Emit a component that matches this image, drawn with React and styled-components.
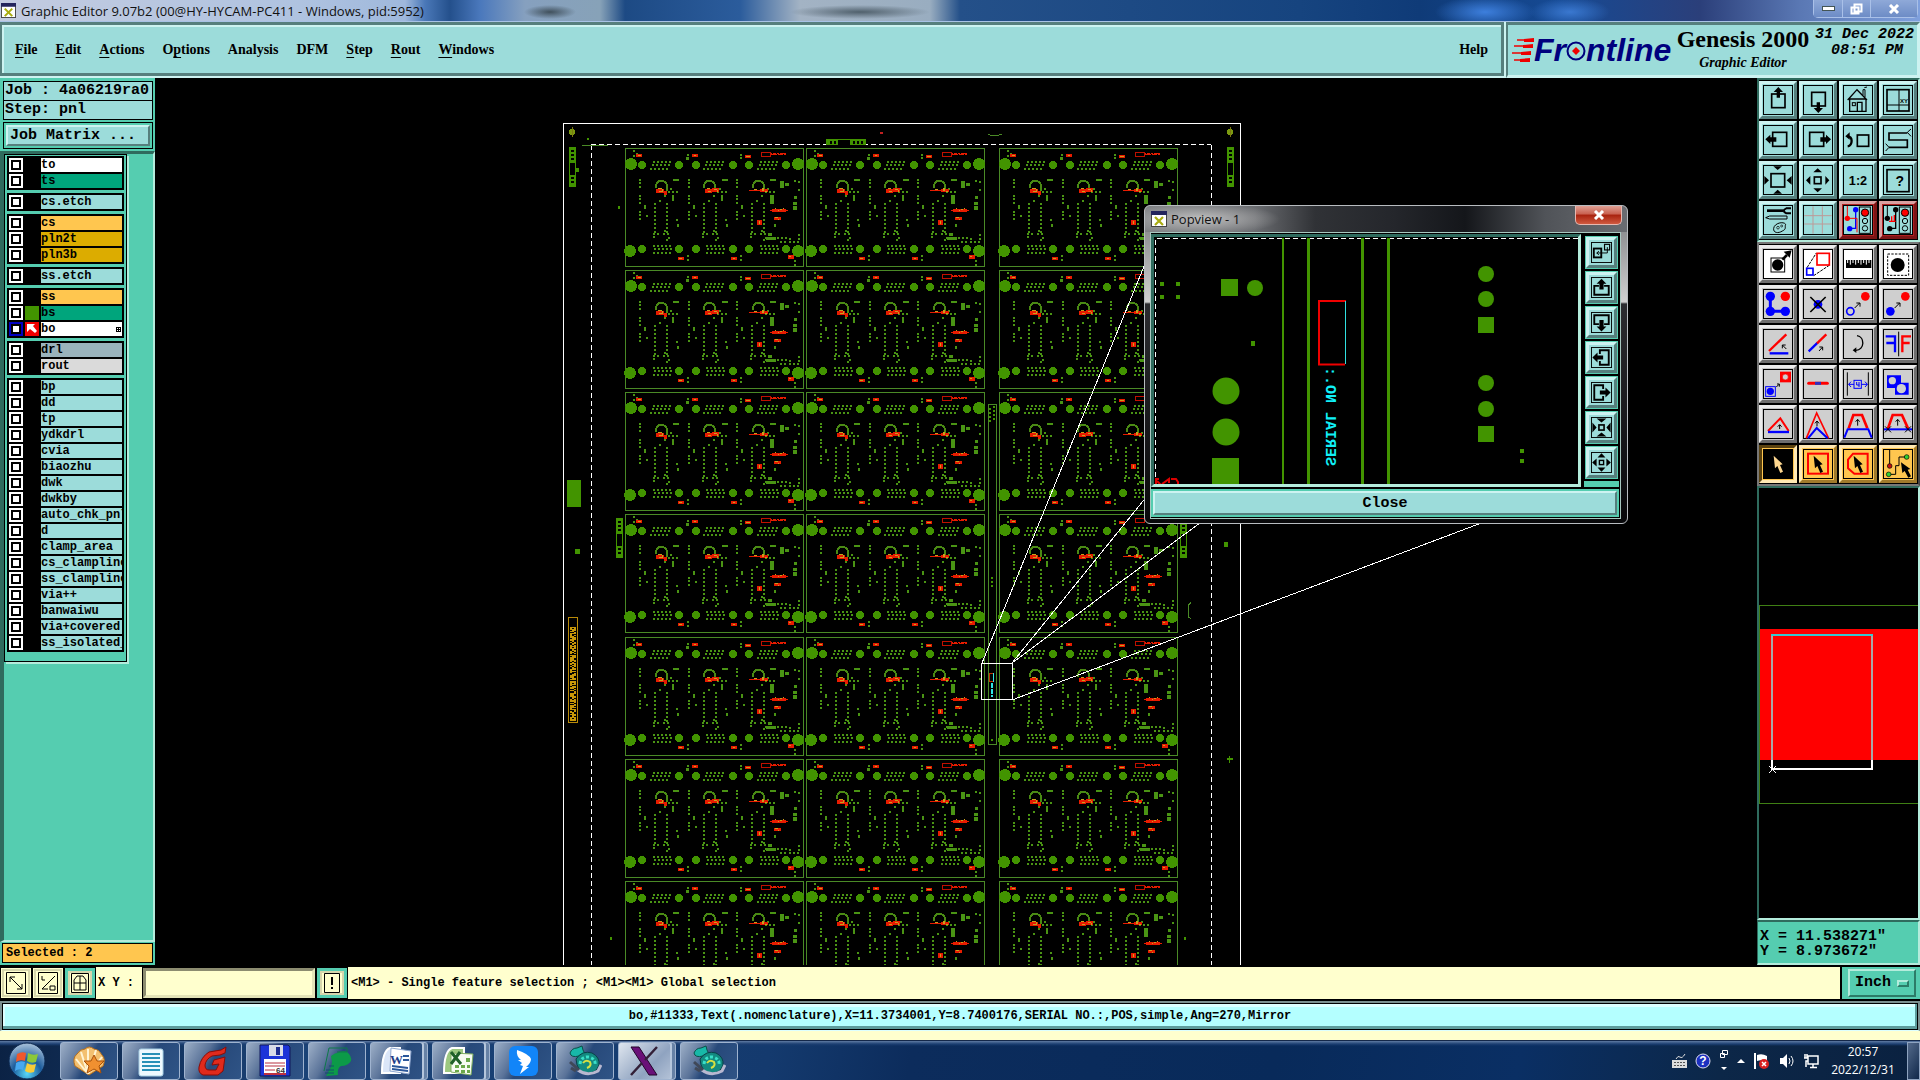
import React from "react";
import styled, { createGlobalStyle, css } from "styled-components";

const C = {
  teal: "#55cdb0",
  tealDark: "#2f6b5e",
  tealLight: "#b4ecdc",
  aqua: "#9cdcda",
  aquaDark: "#567f7d",
  aquaLight: "#cdf3f1",
  amber: "#ffc64f",
  cream: "#ffffce",
  green: "#429400",
  line: "#4a8a26",
  red: "#ff0000",
  blue: "#0000ff",
};

const MONO = `"Liberation Mono", "DejaVu Sans Mono", monospace`;
const SERIF = `"Liberation Serif", "DejaVu Serif", serif`;
const SANS = `"Open Sans", "Noto Sans", sans-serif`;

const Global = createGlobalStyle`
  * { box-sizing: border-box; }
  body { margin: 0; background: #000; }
  button, input, select { font: inherit; color: inherit; margin: 0; padding: 0; border-radius: 0; }
  svg { display: block; }
`;

const bevel = (w, light, dark) => css`
  border-style: solid;
  border-width: ${w}px;
  border-color: ${light} ${dark} ${dark} ${light};
`;

const Screen = styled.div`
  display: flex;
  flex-direction: column;
  min-height: 100vh;
  color: #000;
  font: bold 12px/14px ${MONO};
`;

/* ---------- window title ---------- */

const TitleBar = styled.header`
  display: flex;
  align-items: center;
  justify-content: space-between;
  height: 22px;
  padding-left: 1px;
  border-bottom: 1px solid #a9c3e6;
  background:
    radial-gradient(ellipse 26px 7px at 550px 12px, #40505c, transparent),
    radial-gradient(ellipse 70px 7px at 860px 12px, #50606c, transparent),
    radial-gradient(ellipse 50px 16px at 1485px 12px, #3d7fdd, transparent),
    radial-gradient(ellipse 40px 14px at 1570px 12px, #3a78d0, transparent),
    linear-gradient(90deg, #c3cbe0 0, #afc3e0 300px, #9fb8dc 405px, #4a78b8 425px, #24508c 450px, #4a78bc 480px,
      #86a0bf 525px, #87a2b8 600px, #1d4a84 625px, #2b5c9c 740px, #a3b3c4 800px, #99adc0 930px,
      #245089 960px, #16447f 1300px, #0f3b78 1420px, #164a94 1560px, #2b3f7a 1700px, #5a78b4 1800px, #7fa0dd 100%);
`;

const TitleText = styled.h1`
  display: flex;
  align-items: center;
  gap: 5px;
  margin: 0;
  font: 13px/20px ${SANS};
  color: #111;
`;

const WinButtons = styled.div`
  display: flex;
  align-self: flex-start;
  height: 18px;
  margin-right: 2px;
  border: 1px solid #a9c0e8;
  border-top: 0;
  border-radius: 0 0 5px 5px;
`;

const WinButton = styled.button`
  display: grid;
  place-items: center;
  width: ${(p) => (p.$wide ? 47 : 28)}px;
  border: 0;
  border-left: ${(p) => (p.$first ? 0 : 1)}px solid #a9c0e8;
  background: linear-gradient(#8fa9d8, #6d8cc6);
`;

const AppIcon = ({ size = 16 }) => (
  <svg width={size} height={size} viewBox="0 0 16 16" aria-hidden="true">
    <rect x="0.5" y="0.5" width="15" height="15" fill="#fff" stroke="#444" />
    <rect x="0" y="0" width="16" height="4" fill="#23245c" />
    <path d="M4 6l8 8M12 6l-8 8" stroke="#a9ac10" strokeWidth="2.2" />
  </svg>
);

/* ---------- menu row ---------- */

const TopRow = styled.div`
  display: flex;
  height: 56px;
  background: ${C.aquaLight};
`;

const MenuBar = styled.nav`
  flex: 1;
  display: flex;
  align-items: center;
  gap: 18px;
  margin: 0 2px 2px 0;
  padding: 2px 13px 0 13px;
  background: ${C.aqua};
  border: 3px solid ${C.aquaDark};
  border-width: 3px 3px 3px 2px;
  box-shadow: inset 2px 2px 0 ${C.aquaLight};
  font: bold 14px/20px ${SERIF};
`;

const MenuItem = styled.button`
  border: 0;
  background: none;
  margin-left: ${(p) => (p.$end ? "auto" : 0)};
  padding: 0;
  cursor: pointer;
  u { text-underline-offset: 3px; text-decoration-thickness: 1px; }
`;

const Brand = styled.section`
  display: flex;
  width: 414px;
  padding: 1px 3px 0 4px;
  background: ${C.aqua};
  border-style: solid;
  border-width: 3px 3px 3px 2px;
  border-color: ${C.aquaDark} ${C.aquaLight} ${C.aquaLight} ${C.aquaDark};
`;

const Logo = styled.div`
  display: flex;
  align-items: center;
  width: 160px;
  padding-bottom: 2px;
  color: #00007e;
  font: italic bold 32px/40px "Liberation Sans", sans-serif;
`;

const Product = styled.div`
  width: 140px;
  padding-left: 2px;
  white-space: nowrap;
  text-align: center;
  font: bold 24px/26px ${SERIF};
  small { display: block; font: italic bold 14px/22px ${SERIF}; }
`;

const Stamp = styled.time`
  flex: 1;
  display: flex;
  flex-direction: column;
  align-items: flex-end;
  padding-top: 1px;
  white-space: nowrap;
  font: italic bold 15px/16px ${MONO};
  span + span { padding-right: 11px; }
`;

/* ---------- workspace ---------- */

const Work = styled.main`
  flex: 1;
  display: flex;
  min-height: 760px;
  padding-bottom: 2px;
  background: #000;
`;

const Side = styled.aside`
  display: flex;
  flex-direction: column;
  width: 155px;
  padding-top: 3px;
  background: ${C.teal};
  overflow: hidden;
`;

const JobBox = styled.dl`
  display: grid;
  gap: 1px;
  margin: 0 2px 2px 3px;
  padding: 1px;
  background: #000;
  font: bold 15px/18px ${MONO};
  div { display: flex; gap: 9px; height: 18px; padding-left: 1px; background: ${C.aqua}; white-space: pre; }
  dt, dd { margin: 0; }
`;

const MatrixFrame = styled.div`
  margin: 0 2px 2px 3px;
  padding: 2px;
  border: 1px solid #000;
`;

const MatrixButton = styled.button`
  display: block;
  width: 100%;
  height: 21px;
  padding-left: 2px;
  text-align: left;
  background: ${C.aqua};
  font: bold 15px/15px ${MONO};
  ${bevel(2, C.aquaLight, C.aquaDark)}
`;

const LayerArea = styled.div`
  flex: 1;
  border-style: solid;
  border-width: 3px 2px 2px 4px;
  border-color: ${C.tealDark} ${C.tealLight} ${C.tealLight} ${C.tealDark};
`;

const LayerList = styled.div`
  width: 123px;
  padding: 1px 2px 9px 2px;
  display: flex;
  flex-direction: column;
  gap: 3px;
  border: 1px solid #000;
  box-shadow: 2px 2px 0 ${C.tealLight};
`;

const LayerGroup = styled.ul`
  width: 117px;
  margin: 0;
  padding: 2px 2px 0 2px;
  list-style: none;
  background: #000;
`;

const LayerRow = styled.li`
  display: grid;
  grid-template-columns: 14px 14px 81px;
  column-gap: 2px;
  height: 16px;
  padding-bottom: 2px;
`;

const LayerTick = styled.input`
  appearance: none;
  width: 14px;
  height: 14px;
  border: 2px solid ${(p) => (p.$on ? "#0000c0" : "#fff")};
  background: #fff;
  box-shadow: inset 0 0 0 2px #000;
`;

const Swatch = styled.span`
  background: ${(p) => p.$c};
`;

const LayerName = styled.label`
  display: flex;
  justify-content: space-between;
  align-items: center;
  padding-right: 1px;
  overflow: hidden;
  white-space: nowrap;
  background: ${(p) => p.$c};
  line-height: 14px;
`;

const Selected = styled.output`
  margin: 1px 2px 2px 2px;
  padding-left: 3px;
  border: 1px solid #000;
  background: ${C.amber};
  line-height: 18px;
`;

const Canvas = styled.div`
  position: relative;
  flex: 1;
  min-width: 0;
  > svg { position: absolute; inset: 0; width: 100%; height: 100%; }
`;

/* ---------- tool palette ---------- */

const Palette = styled.aside`
  display: flex;
  flex-direction: column;
  width: 163px;
`;

const ToolGrid = styled.div`
  display: grid;
  grid-template-columns: repeat(4, 38px);
  gap: 2px;
  padding: 1px 1px 1px 0;
  background: #000;
  border-style: solid;
  border-width: 2px;
  border-color: ${(p) => (p.$gray ? "#777 #444 #777 #777" : `${C.tealDark} ${C.tealLight} ${C.tealLight} ${C.tealDark}`)};
`;

const tones = {
  aqua: ["#9cdcda", C.aquaLight, C.aquaDark],
  red: ["#b02020", "#d9a0a0", "#7c1515"],
  gray: ["#c6c6c6", "#ececec", "#6e6e6e"],
  amber: [C.amber, "#ffe9b4", "#a07a2c"],
  active: [C.amber, "#5a4210", "#ffe9b4"],
};

const Tool = styled.button`
  display: grid;
  place-items: center;
  width: 38px;
  height: 38px;
  background: ${(p) => tones[p.$tone][0]};
  ${(p) => bevel(3, tones[p.$tone][1], tones[p.$tone][2])}
`;

const toolBack = { white: "#fff", black: "#000", gray: "#cfcfcf", aqua: "#9cdcda", amber: C.amber };

const Glyph = ({ name, back, size = 30 }) => (
  <svg width={size} height={size} viewBox="0 0 90 90" aria-hidden="true">
    <rect x="1.5" y="1.5" width="87" height="87" fill={toolBack[back]} stroke="#000" strokeWidth={size < 30 ? 5 : 3} />
    <g fill="none" stroke="#000" strokeWidth="5" strokeLinejoin="miter">
      {glyphs[name]}
    </g>
  </svg>
);

const K = { fill: "#000", stroke: "none" };
const R = { fill: C.red, stroke: "none" };
const B = { fill: C.blue, stroke: "none" };
const cursor = "M32 20L36 58L43 51L52 72L60 68L51 48L59 46Z";

const light = (a, b) => (
  <>
    <rect x="49" y="6" width="33" height="79" strokeWidth="3" />
    <circle cx="66" cy="23" r="11" fill={C.red} strokeWidth="3" />
    <circle cx="66" cy="48" r="8" strokeWidth="3" />
    <circle cx="66" cy="70" r="8" strokeWidth="3" />
    <path d="M13 3V40" stroke={b} strokeWidth="3" />
    <path d="M38 14V70H20M38 30" stroke={a} strokeWidth="4" />
    <circle cx="38" cy="14" r="8" fill={a} stroke="none" />
    <circle cx="20" cy="71" r="8" fill={a} stroke="none" />
    <circle cx="13" cy="40" r="8" fill={b} stroke="none" />
  </>
);

const glyphs = {
  up: (<><rect x="26" y="27" width="40" height="41" /><path d="M46 6L60 21H51V38H41V21H32Z" {...K} /></>),
  down: (<><rect x="26" y="22" width="41" height="41" /><path d="M46 84L60 69H51V52H41V69H32Z" {...K} /></>),
  left: (<><rect x="29" y="22" width="42" height="42" /><path d="M7 43L22 29V37H40V50H22V57Z" {...K} /></>),
  right: (<><rect x="20" y="22" width="42" height="42" /><path d="M84 43L69 29V37H52V50H69V57Z" {...K} /></>),
  home: (
    <><path d="M14 45L42 14L72 45M20 42V79H69V42M20 42H69M43 79V52H57V79" strokeWidth="4" />
      <rect x="28" y="53" width="9" height="9" strokeWidth="3" /><path d="M60 30V14H66V36M64 8L72 6" strokeWidth="3" /></>
  ),
  xy: (
    <><rect x="12" y="14" width="66" height="64" /><path d="M48 14V78M12 60H78" strokeWidth="3" />
      <text x="51" y="54" fontSize="18" fontFamily="Liberation Sans" {...K}>XY</text></>
  ),
  back: (<><rect x="43" y="30" width="34" height="34" /><path d="M13 34C30 32 30 62 14 64" strokeWidth="7" /><path d="M7 34L20 22V44Z" {...K} /></>),
  snake: (<><path d="M73 24H18V45H73V67H18" /><path d="M84 12L73 22L84 34M8 56L18 67L8 78" strokeWidth="3" /></>),
  fit: (
    <><rect x="24" y="26" width="41" height="40" />
      <path d="M44 15L31 4H57ZM44 74L31 86H57ZM18 46L4 33V59ZM71 46L86 33V59Z" {...K} /></>
  ),
  spread: (
    <><rect x="34" y="36" width="20" height="20" />
      <path d="M44 10L31 22H57ZM44 82L31 70H57ZM9 46L22 33V59ZM79 46L67 33V59Z" {...K} /></>
  ),
  ratio: <text x="45" y="59" textAnchor="middle" fontSize="38" fontWeight="bold" fontFamily="Liberation Sans" {...K}>1:2</text>,
  help: (
    <><rect x="12" y="14" width="66" height="66" />
      <text x="50" y="64" textAnchor="middle" fontSize="42" fontWeight="bold" fontFamily="Liberation Sans" {...K}>?</text></>
  ),
  tools: (
    <><path d="M12 17H62" strokeWidth="8" /><path d="M84 10H70C60 14 60 20 70 25H84" strokeWidth="6" />
      <path d="M8 38L20 33H72V42H20Z" strokeWidth="3" />
      <path d="M32 70C34 54 62 48 68 58C64 66 72 72 58 78C46 86 30 84 32 70Z" strokeWidth="3" />
      <circle cx="45" cy="68" r="4" strokeWidth="2" /><circle cx="56" cy="63" r="3" strokeWidth="2" /></>
  ),
  grid: <path d="M30 4V86M58 4V86M4 32H86M4 57H86" stroke="#bd9a98" strokeWidth="3" />,
  lightBlue: (<>{light(C.blue, C.red)}<path d="M13 40H42V82" stroke={C.red} strokeWidth="3" /></>),
  lightBlack: (<>{light("#000", "#000")}<path d="M18 49H38M26 49V34M34 49V30" stroke={C.red} strokeWidth="4" /></>),
  pick: (
    <><rect x="24" y="27" width="41" height="42" strokeWidth="3" /><circle cx="44" cy="48" r="17" {...K} />
      <path d="M58 32L72 18" strokeWidth="8" /><path d="M86 4L62 8L80 26Z" {...K} /></>
  ),
  zoomRect: (
    <><path d="M12 56L40 12M32 80L80 48" strokeWidth="3" strokeDasharray="9 3" />
      <rect x="42" y="13" width="37" height="35" stroke={C.red} /><rect x="11" y="58" width="19" height="20" stroke={C.blue} /></>
  ),
  ruler: (<><rect x="9" y="33" width="76" height="24" {...K} /><path d="M14 33v9M22 33v14M30 33v9M38 33v14M46 33v9M54 33v14M62 33v9M70 33v14M78 33v9" stroke="#fff" strokeWidth="3" /></>),
  region: (<><rect x="14" y="15" width="63" height="64" strokeWidth="3" strokeDasharray="7 4" /><circle cx="44" cy="48" r="21" {...K} /></>),
  net: (
    <><path d="M22 22V67H66" stroke={C.blue} strokeWidth="9" /><circle cx="22" cy="22" r="14" {...B} />
      <circle cx="22" cy="67" r="14" {...B} /><circle cx="67" cy="67" r="14" {...B} /><circle cx="67" cy="22" r="14" {...R} /></>
  ),
  del: (<><circle cx="45" cy="46" r="13" {...B} /><path d="M22 24L68 69M68 24L22 69" /></>),
  copy: (<><circle cx="22" cy="67" r="11" stroke={C.blue} /><circle cx="67" cy="22" r="13" {...R} /><path d="M35 57L50 42M40 42H51V53" strokeWidth="3" /></>),
  move: (<><circle cx="22" cy="67" r="13" {...B} /><circle cx="67" cy="22" r="13" {...R} /><path d="M35 57L50 42M40 42H51V53" strokeWidth="3" /></>),
  angle: (<><path d="M18 66L70 16" stroke={C.red} strokeWidth="7" /><path d="M20 73H76" stroke={C.blue} strokeWidth="7" /><path d="M70 60L58 48M58 58V48H68" strokeWidth="3" /></>),
  stretch: (<><path d="M17 67L44 41" stroke={C.blue} strokeWidth="7" /><path d="M42 43L70 16" stroke={C.red} strokeWidth="7" /><path d="M48 66L58 55M49 54H59V64" strokeWidth="3" /></>),
  rotate: (<><path d="M42 20C66 24 66 62 38 64" strokeWidth="4" /><path d="M29 64L40 55V72Z" {...K} /></>),
  mirror: (<><path d="M8 22H36V70M10 42H36" stroke={C.blue} strokeWidth="7" /><path d="M84 22H58V70M58 42H80" stroke={C.red} strokeWidth="7" /><path d="M47 8V82" strokeWidth="3" /></>),
  swap: (
    <><rect x="51" y="8" width="33" height="32" {...R} /><circle cx="67" cy="24" r="9" fill="#cfcfcf" stroke={C.red} strokeWidth="2" />
      <rect x="8" y="53" width="29" height="29" stroke={C.blue} strokeWidth="3" /><circle cx="22" cy="67" r="11" {...B} />
      <path d="M40 54L48 46M42 45H49V53" strokeWidth="3" /></>
  ),
  segment: (<><path d="M17 43H73" stroke={C.red} strokeWidth="9" strokeLinecap="round" /><path d="M36 43H54" stroke="#3030c0" strokeWidth="9" /></>),
  width: (
    <><path d="M13 10V80M76 10V80" strokeWidth="3" />
      <g stroke={C.blue} strokeWidth="3"><rect x="33" y="34" width="22" height="24" /><path d="M17 46H33M55 46H73M24 38L17 46L24 54M66 38L73 46L66 54M41 39V48H49M48 39V54" /></g></>
  ),
  merge: (<><path d="M12 19H54V41H77V77H36V57H12Z" {...B} /><circle cx="28" cy="35" r="11" fill="#cfcfcf" stroke="none" /><circle cx="55" cy="59" r="14" fill="#cfcfcf" stroke="none" /></>),
  tri: (<><path d="M15 66L52 28L77 66" stroke={C.red} strokeWidth="6" /><path d="M15 69H78" stroke={C.blue} strokeWidth="7" /><path d="M50 60V48M44 53L50 47L56 53" strokeWidth="3" /></>),
  peak: (<><path d="M10 88L41 12L77 88" stroke={C.red} /><path d="M15 88L41 57L74 88" stroke={C.blue} strokeWidth="6" /><path d="M42 52V36M36 43L42 36L48 43" strokeWidth="3" /></>),
  trap: (<><path d="M17 58L31 18H57L73 58" stroke={C.red} strokeWidth="8" /><path d="M4 86L14 61H76L86 86" stroke={C.blue} strokeWidth="6" /><path d="M44 50V32M38 38L44 31L50 38" strokeWidth="3" /></>),
  trapX: (
    <><path d="M15 58L29 18H57L75 58" stroke={C.red} strokeWidth="8" /><path d="M3 61H87" stroke={C.blue} strokeWidth="6" />
      <path d="M44 50V32M38 38L44 31L50 38M6 52L24 70M24 52L6 70M66 52L84 70M84 52L66 70" strokeWidth="3" /></>
  ),
  arrow: <path d={cursor} fill="#ffd890" stroke="none" />,
  arrowRect: (<><rect x="15" y="14" width="60" height="60" stroke={C.red} strokeWidth="6" /><path d={cursor} {...K} /></>),
  arrowPoly: (<><path d="M30 14H74V74H34L15 58V32Z" stroke={C.red} strokeWidth="6" /><path d={cursor} {...K} /></>),
  arrowNet: (
    <><path d="M20 3V48M16 76H38V50H48V24H70" strokeWidth="3" />
      <circle cx="20" cy="51" r="7" fill="#c01010" strokeWidth="2" /><circle cx="17" cy="76" r="7" fill="#30d030" strokeWidth="2" />
      <circle cx="71" cy="24" r="7" fill="#30d030" strokeWidth="2" /><path d="M54 40L58 72L65 66L76 86L84 82L74 62L82 60Z" {...K} /></>
  ),
  dock: (<><rect x="12" y="28" width="32" height="38" strokeWidth="8" /><rect x="58" y="10" width="22" height="24" /><path d="M24 47H70V22M34 39L25 47L34 56" strokeWidth="4" /></>),
  panUp: (<><path d="M34 38H14V76H76V38H56" strokeWidth="8" /><path d="M45 8L66 29H54V54H36V29H24Z" {...K} /></>),
  panDown: (<><path d="M34 52H14V14H76V52H56" strokeWidth="8" /><path d="M45 84L66 62H54V34H36V62H24Z" {...K} /></>),
  panLeft: (<><path d="M38 30V14H76V76H38V60" strokeWidth="8" /><path d="M6 45L28 24V36H52V54H28V66Z" {...K} /></>),
  panRight: (<><path d="M52 30V14H14V76H52V60" strokeWidth="8" /><path d="M84 45L62 24V36H38V54H62V66Z" {...K} /></>),
  shrink: (
    <><rect x="34" y="34" width="22" height="22" strokeWidth="7" />
      <path d="M45 24L24 6H66ZM45 66L24 84H66ZM24 45L6 24V66ZM66 45L84 24V66Z" {...K} /></>
  ),
  grow: (
    <><rect x="36" y="36" width="18" height="18" strokeWidth="6" />
      <path d="M45 5L62 24H28ZM45 85L62 66H28ZM5 45L24 28V62ZM85 45L66 28V62Z" {...K} /></>
  ),
};

const aquaTools = [
  "up", "down", "home", "xy", "left", "right", "back", "snake",
  "fit", "spread", "ratio", "help", "tools", "grid", "lightBlue", "lightBlack",
];
const grayTools = [
  "pick", "zoomRect", "ruler", "region", "net", "del", "copy", "move", "angle", "stretch",
  "rotate", "mirror", "swap", "segment", "width", "merge", "tri", "peak", "trap", "trapX",
  "arrow", "arrowRect", "arrowPoly", "arrowNet",
];

const Overview = styled.div`
  flex: 1;
  min-height: 200px;
  border-style: solid;
  border-width: 2px;
  border-color: ${C.tealDark} ${C.tealLight} ${C.tealLight} ${C.tealDark};
  svg { width: 100%; height: 100%; }
`;

const Coords = styled.output`
  height: 45px;
  padding: 7px 2px;
  white-space: pre;
  background: ${C.teal};
  border-style: solid;
  border-width: 2px 2px 2px 1px;
  border-color: ${C.tealDark} ${C.tealLight} ${C.tealLight} ${C.tealDark};
  font: bold 15px/15px ${MONO};
`;

/* ---------- board drawing ---------- */

const sq = (list) =>
  list
    .map(([x, y, w = 6, h = 6]) => {
      const X = Math.round((x - 15) / 3);
      const Y = Math.round((y - 114) / 3);
      const W = Math.max(1, Math.round(w / 3));
      return `M${X} ${Y}h${W}v${Math.max(1, Math.round(h / 3))}h-${W}z`;
    })
    .join("");

const pads = [];
[0, 159, 321].forEach((o) => {
  for (let i = 0; i < 5; i++) {
    pads.push([99 + o + i * 12, 153], [96 + o + i * 12, 163], [90 + o + i * 12, 174]);
    pads.push([99 + o + i * 12, 405], [102 + o + i * 12, 415], [99 + o + i * 12, 426]);
  }
});
[0, 147, 291].forEach((o, n) => {
  [207, 216, 228, 255, 264, 276, 303, 312, 324].forEach((y) => pads.push([57 + o, y]));
  pads.push([72 + o, 285, 6, 12], [78 + o, 315]);
  for (let y = 279; y < 366; y += 12) pads.push([102 + o, y], [138 + o, y]);
  pads.push([99 + o, 369], [111 + o, 369], [129 + o, 369], [141 + o, 369], [132 + o, 361], [99 + o, 378], [144 + o, 380], [138 + o, 387]);
  pads.push([159 + o, 207, 18, 6], [144 + o, 243], [156 + o, 243], [168 + o, 243], [150 + o, 234], [132 + o, 255], [117 + o, 270]);
  if (n < 2) pads.push([156 + o, 255, 6, 18], [168 + o, 327], [171 + o, 342, 6, 9]);
});
[[38, 121], [38, 134], [48, 129], [200, 132], [198, 142, 9, 9], [360, 132], [360, 142], [200, 435], [200, 448], [360, 435], [360, 448], [522, 449], [522, 461],
  [480, 213, 12, 21], [495, 219, 12, 9], [522, 210], [534, 213], [534, 237], [450, 255, 12, 28], [522, 258, 9, 9], [520, 275, 11, 9], [519, 288, 12, 12],
  [462, 342, 6, 9], [444, 370, 12, 9], [438, 381, 30, 9], [471, 381], [483, 381], [495, 381], [507, 384], [480, 393], [492, 393], [507, 393], [519, 393], [531, 393], [534, 384], [534, 372]]
  .forEach((p) => pads.push(p));

const reds = [
  [48, 133, 18, 9], [216, 133, 18, 9], [376, 135, 17, 9], [174, 441, 17, 9], [333, 441, 17, 9], [504, 436, 18, 12],
  [108, 236, 24, 12], [132, 243, 9, 12], [255, 237, 21, 12], [276, 234, 21, 12], [387, 240, 33, 4], [420, 237, 24, 9],
  [450, 300, 54, 4], [456, 297, 42, 9], [463, 321, 20, 9], [411, 330, 15, 15], [453, 130, 45, 6],
];
const ambers = [
  [54, 136, 9, 3], [222, 136, 6, 3], [378, 138, 12, 3], [178, 444, 9, 3], [339, 444, 6, 3], [507, 438, 6, 3],
  [114, 234, 12, 3], [117, 243, 9, 3], [126, 237, 3, 9], [261, 234, 9, 3], [264, 243, 9, 3], [282, 238, 9, 3], [291, 240, 3, 6],
  [402, 237, 9, 3], [426, 234, 6, 9], [435, 243, 6, 3],
  [465, 294, 4, 3], [474, 300, 4, 3], [480, 297, 6, 4], [489, 294, 3, 4], [466, 321, 9, 3], [474, 327, 4, 3], [417, 333, 3, 9],
];
const gaps = [[456, 130, 3, 3], [468, 129, 3, 3], [477, 129, 3, 3], [489, 133, 3, 3], [471, 133, 3, 3]];

const Board = () => (
  <g>
    <rect x="0.5" y="0.5" width="178" height="118" fill="none" stroke={C.line} />
    <g fill={C.green}>
      {[[6, 16], [173, 16], [5, 103], [173, 103]].map(([x, y]) => (
        <circle key={x + "-" + y} cx={x} cy={y} r="6" />
      ))}
      {[17, 54, 71, 108, 124, 161].map((x) => (
        <g key={x}><circle cx={x} cy="17" r="4" /><circle cx={x} cy="101" r="4" /></g>
      ))}
      <path d={sq(pads)} fill="#4a9414" />
    </g>
    <g fill="none" stroke="#4a8a14" strokeWidth="2">
      {[36, 84, 133].map((x) => (
        <path key={x} d={`M${x - 5} 40V37q1 -4 5 -4q5 0 6 4v6`} />
      ))}
    </g>
    <path d={sq(reds)} fill="#e81c00" />
    <path d={sq(ambers)} fill="#c8a01c" />
    <path d={sq(gaps)} fill="#000" />
    <rect x="136.5" y="4.5" width="9" height="4" fill="none" stroke="#c01000" />
  </g>
);

const rows = [148, 270, 392, 514, 637, 759, 881];
const cols = [625, 806, 999];

const Comb = ({ x, y, turned }) => (
  <g transform={turned ? `translate(${x} ${y}) rotate(90)` : `translate(${x} ${y})`}>
    <rect width={turned ? 6 : 7} height="40" fill={C.green} />
    <rect x="1" y="16" width="5" height="12" fill="#000" />
    <path d="M2 3h3v2h-3zM2 7h3v2h-3zM2 11h3v2h-3zM2 30h3v2h-3zM2 34h3v2h-3z" fill="#000" />
  </g>
);

const PanelDrawing = () => (
  <svg role="img" aria-label="Panel layout" shapeRendering="crispEdges">
    <defs><g id="board"><Board /></g></defs>
    <g transform="translate(-155 -78)">
      {cols.map((x) => rows.map((y) => <use key={x + "_" + y} href="#board" x={x} y={y} />))}
      <path d="M563.5 1200V123.5H1240.5V1200" fill="none" stroke="#fff" />
      <path d="M591.5 145V1200M591 144.5H1211M1211.5 145V1200" fill="none" stroke="#fff" strokeDasharray="5 3" />
      <rect x="988.5" y="404.5" width="8" height="340" fill="none" stroke={C.line} />
      <path d="M990 408v14M994 406v16M992 577v10M991 740h3" stroke={C.green} strokeWidth="2" strokeDasharray="2 2" />
      <Comb x="569" y="147" /><Comb x="1227" y="147" /><Comb x="616" y="518" /><Comb x="1180" y="518" />
      <Comb x="866" y="139" turned />
      <path d="M582 145.5h26M1188.5 604v14M1191 602l-2 3M1191 619l-2 -2M988 134q6 4 14 0" stroke={C.line} fill="none" />
      <g fill="#7c9a10"><circle cx="572" cy="132" r="3" /><circle cx="1230" cy="132" r="3" /></g>
      <path d="M572.5 127v10M1230.5 127v10" stroke="#7c7a10" />
      <g fill={C.green}>
        <rect x="567" y="480" width="14" height="27" /><rect x="575" y="549" width="5" height="5" />
        <rect x="1224" y="542" width="4" height="5" /><rect x="618" y="206" width="2" height="3" />
        <rect x="610" y="937" width="2" height="3" /><rect x="1184" y="937" width="2" height="3" />
        <rect x="587" y="138" width="2" height="2" /><rect x="576" y="168" width="3" height="4" />
        <path d="M1229 756h1v2h3v2h-3v3h-1v-3h-2v-2h2z" />
      </g>
      <rect x="880" y="132" width="3" height="2" fill="#c02020" />
      <rect x="568.5" y="617.5" width="9" height="105" fill="none" stroke="#b98a08" />
      <path d="M571 627V721" stroke="#c89808" strokeWidth="2" strokeDasharray="3 1 1 1 5 1 2 1 1 2 4 2" />
      <path d="M573 627V721" stroke="#c89808" strokeWidth="2" strokeDasharray="1 1 3 1 1 2 6 1 2 1" />
      <path d="M575 627V721" stroke="#c89808" strokeWidth="2" strokeDasharray="4 1 2 1 1 1 3 2 2 1" />
      <g stroke="#fff" fill="none">
        <rect x="981.5" y="663.5" width="31" height="36" />
        <path d="M982 663L1156 237M1012 663L1156 485M1012 663L1582 238M1012 700L1582 485" />
      </g>
      <path d="M993 673.5H989.5V681.5H993" stroke="#c03000" fill="none" /><path d="M993.5 673v9" stroke="#30e8e8" /><path d="M992 683v14" stroke="#30e8e8" strokeWidth="2" strokeDasharray="5 1" />
    </g>
  </svg>
);

/* ---------- popview window ---------- */

const Pop = styled.section`
  position: absolute;
  left: 989px;
  top: 127px;
  width: 484px;
  padding: 0 6px 4px 5px;
  border: 1px solid #b8bcc0;
  border-radius: 6px;
  background:
    radial-gradient(ellipse 80px 16px at 55px 13px, #c0c0c0, transparent),
    linear-gradient(90deg, #808285 0, #6a6c70 110px, #303236 170px, #24262b 250px, #14161a 320px, #505358 400px, #6a6d72 100%) top / 100% 26px no-repeat,
    linear-gradient(#77797c 0, #d0d0d0 96px, #2c2c30 98px, #08080a 100%);
`;

const PopTitle = styled.div`
  display: flex;
  justify-content: space-between;
  height: 26px;
  padding-left: 1px;
  h2 { display: flex; align-items: center; gap: 4px; margin: 0; font: 13px/26px ${SANS}; color: #111; }
`;

const PopX = styled.button`
  display: grid;
  place-items: center;
  width: 47px;
  height: 19px;
  margin-right: -1px;
  border: 1px solid #e8b8b0;
  border-top: 0;
  border-radius: 0 0 5px 5px;
  background: linear-gradient(#e0a094 0, #c9604f 45%, #a8220e 50%, #d05a40 100%);
`;

const PopBody = styled.div`
  padding: 1px 1px 1px 0;
  border: 1px solid #a8c8c0;
  background: #000;
`;

const PopTop = styled.div`
  display: flex;
  gap: 3px;
`;

const PopView = styled.div`
  flex: 1;
  min-width: 0;
  border-style: solid;
  border-width: 3px;
  border-color: ${C.tealDark} ${C.tealLight} ${C.tealLight} ${C.tealDark};
  svg { width: 100%; height: 247px; }
`;

const PopTools = styled.div`
  display: flex;
  flex-direction: column;
  gap: 2px;
  padding-top: 2px;
  width: 35px;
  &::after { content: ""; flex: 1; background: ${C.teal}; }
`;

const PopTool = styled.button`
  display: grid;
  place-items: center;
  width: 33px;
  height: 33px;
  margin-left: 1px;
  background: ${C.aqua};
  outline: 1px solid ${C.teal};
  outline-offset: -1px;
  ${bevel(4, C.aquaLight, C.aquaDark)}
`;

const PopClose = styled.button`
  display: block;
  width: 100%;
  height: 28px;
  margin-top: 2px;
  padding-top: 1px;
  background: ${C.aqua};
  outline: 2px solid ${C.teal};
  outline-offset: -2px;
  ${bevel(4, C.aquaLight, C.aquaDark)}
  font: bold 15px/18px ${MONO};
`;

const Popview = () => (
  <Pop aria-label="Popview - 1">
    <PopTitle>
      <h2><AppIcon />Popview - 1</h2>
      <PopX aria-label="Close window">
        <svg width="12" height="10" viewBox="0 0 12 10"><path d="M2 1l8 8M10 1l-8 8" stroke="#fff" strokeWidth="3" /></svg>
      </PopX>
    </PopTitle>
    <PopBody>
      <PopTop>
        <PopView>
          <svg role="img" aria-label="Zoomed board area">
            <g transform="translate(-1154 -237)">
              <path d="M1155.5 485V238.5H1582" fill="none" stroke="#fff" strokeDasharray="5 3" />
              <g fill={C.green}>
                <path d="M1282 238h2v247h-2zM1307 238h3v247h-3zM1361 238h3v247h-3zM1387 238h3v247h-3z" />
                <path d="M1160 282h4v4h-4zM1176 282h4v4h-4zM1160 295h4v4h-4zM1176 295h4v4h-4zM1221 279h17v17h-17zM1251 341h4v5h-4z" />
                <path d="M1212 458h27v27h-27zM1478 317h16v16h-16zM1478 426h16v16h-16zM1520 449h4v4h-4zM1520 459h4v4h-4z" />
                <circle cx="1255" cy="288" r="8" />
                <circle cx="1226" cy="391" r="13.5" /><circle cx="1226" cy="432" r="13.5" />
                <circle cx="1486" cy="274" r="8" /><circle cx="1486" cy="299" r="8" />
                <circle cx="1486" cy="383" r="8" /><circle cx="1486" cy="409" r="8" />
              </g>
              <path d="M1346 301H1319V364.5H1345" fill="none" stroke="#f00000" strokeWidth="2" />
              <path d="M1345.5 301V364" stroke="#30e0e0" />
              <path d="M1156 485v-6h3M1157 481l4 4M1162 484l7 -5v4M1171 479h5l2 3v3" fill="none" stroke="#d00" strokeWidth="2" />
              <text transform="translate(1326 466) rotate(-90) scale(1 -1)" fontFamily="Liberation Mono" fontSize="15" fontWeight="bold" fill="#10f0f8">SERIAL NO.:</text>
            </g>
          </svg>
        </PopView>
        <PopTools>
          {["dock", "panUp", "panDown", "panLeft", "panRight", "shrink", "grow"].map((n) => (
            <PopTool key={n} aria-label={n}><Glyph name={n} back="aqua" size={21} /></PopTool>
          ))}
        </PopTools>
      </PopTop>
      <PopClose>Close</PopClose>
    </PopBody>
  </Pop>
);

/* ---------- status ---------- */

const StatusRow = styled.div`
  display: flex;
  height: 32px;
  background: ${C.cream};
`;

const StatusButton = styled.button`
  display: grid;
  place-items: center;
  width: 32px;
  background: ${C.cream};
  border: 1px solid #000;
  box-shadow: inset 0 0 0 ${(p) => (p.$teal ? 3 : 1)}px ${(p) => (p.$teal ? C.teal : C.cream)}, inset 0 0 0 ${(p) => (p.$teal ? 5 : 3)}px #d6d6ac;
`;

const EntryLabel = styled.label`
  width: 46px;
  padding-left: 2px;
  line-height: 32px;
  white-space: pre;
`;

const Entry = styled.input`
  width: 172px;
  margin: 1px;
  padding: 0 4px;
  background: ${C.cream};
  outline: 1px solid #000;
  ${bevel(3, "#8c8c70", "#e4e4b8")}
`;

const Message = styled.p`
  flex: 1;
  margin: 0;
  padding-left: 3px;
  line-height: 32px;
`;

const UnitBox = styled.div`
  width: 80px;
  padding: 2px 4px 2px 6px;
  background: ${C.teal};
  border-left: 2px solid #000;
`;

const UnitInner = styled.div`
  display: flex;
  align-items: center;
  justify-content: space-between;
  height: 28px;
  padding: 0 5px;
  ${bevel(2, C.tealLight, "#2c7c68")}
`;

const UnitSelect = styled.select`
  appearance: none;
  border: 0;
  background: none;
  font: bold 15px/20px ${MONO};
`;

const UnitMark = styled.i`
  width: 12px;
  height: 7px;
  ${bevel(2, C.tealLight, "#2c7c68")}
`;

const InfoWrap = styled.div`
  padding-bottom: 9px;
  border-top: 2px solid #000;
  background: ${C.cream};
`;

const InfoBar = styled.section`
  padding: 0;
  border-style: solid;
  border-width: 2px 2px 1px 2px;
  border-color: #7b8f8f #7b8f8f #dcffff #7b8f8f;
  background: #b4ffff;
  p {
    height: 27px;
    margin: 0;
    border: 1px solid #000;
    box-shadow: inset -2px -3px 0 #5e9d9d, inset 2px 3px 0 #dcffff;
    text-align: center;
    line-height: 24px;
  }
`;

const Lower = styled.footer`
  background: #000;
`;

/* ---------- taskbar ---------- */

const Taskbar = styled.div`
  display: flex;
  align-items: center;
  height: 40px;
  padding-left: 7px;
  border-top: 1px solid #14284a;
  background: linear-gradient(#5f7ba3 0, #1c3f72 3px, transparent 5px),
    linear-gradient(100deg, #0b2244 0, #1b4377 300px, #143a6e 760px, #0c2c5c 900px, #082a5a 1260px, #0a2f64 1500px, #0c2748 1700px, #0a2140 100%);
`;

const TaskButtons = styled.div`
  display: flex;
  gap: 4px;
  margin-left: 13px;
`;

const Task = styled.button`
  display: grid;
  place-items: center;
  width: 58px;
  height: 38px;
  padding-right: ${(p) => (p.$stack ? 6 : 0)}px;
  border: 1px solid #9fb3cf;
  border-radius: 3px;
  background: ${(p) => (p.$active ? "linear-gradient(135deg, #dfe6ef, #8fa3c0 60%, #b8c6da)" : "linear-gradient(120deg, #9dafc7 0, #5a7399 35%, #27497a 50%, #2f5486 100%)")};
  box-shadow: ${(p) => (p.$stack ? "inset -4px 0 0 -1px #6782a6, inset -5px 0 0 #b5c6dc" : "none")};
`;

const Orb = styled.button`
  width: 40px;
  height: 40px;
  border: 0;
  background: none;
`;

const Tray = styled.div`
  display: flex;
  align-items: center;
  gap: 8px;
  margin-left: auto;
  color: #fff;
`;

const Clock = styled.time`
  width: 72px;
  text-align: center;
  white-space: pre-line;
  font: 12px/18px ${SANS};
`;

const ShowDesktop = styled.button`
  width: 13px;
  height: 38px;
  border: 1px solid #8ea3c0;
  background: linear-gradient(120deg, #53698a, #10284a);
`;

const chameleon = (
  <svg width="34" height="32" viewBox="0 0 34 32">
    <path d="M2 8Q4 3 9 3L14 1L15 5L17 9L11 11Q3 13 2 8Z" fill="#18b8a8" stroke="#0a5048" />
    <path d="M8 14Q14 5 24 8Q32 12 31 20Q28 29 18 28Q9 27 8 14Z" fill="#138a80" stroke="#0a4048" />
    <path d="M12 19Q13 11 21 12Q28 14 27 20" fill="none" stroke="#3ae0c8" strokeWidth="3" strokeDasharray="3 2" />
    <path d="M15 18Q18 14 22 17Q24 21 19 23" fill="none" stroke="#d8e040" strokeWidth="2" />
    <path d="M10 25Q19 32 30 26L33 20" fill="none" stroke="#b8b8d0" strokeWidth="3" />
    <path d="M2 17L11 25M3 23l5 3" stroke="#404858" strokeWidth="3" />
  </svg>
);

const tasks = [
  ["Shell", (
    <svg width="36" height="32" viewBox="0 0 36 32">
      <path d="M18 30L4 21Q1 13 6 9Q9 4 14 4Q18 0 23 4Q28 4 31 10Q35 14 32 21Z" fill="#f3c070" stroke="#b8701c" />
      <path d="M17 29L5 14M17 29L10 7M17 29L17 4M18 28L25 5M20 26L31 12" stroke="#fff4d4" strokeWidth="2" />
      <path d="M23 10l3 6l7 0l-5 5l2 7l-7 -4l-7 4l2 -7l-5 -5l7 0z" fill="#f09030" stroke="#a85008" />
    </svg>
  )],
  ["Notes", (
    <svg width="26" height="32" viewBox="0 0 26 32">
      <rect x="1" y="4" width="24" height="27" rx="2" fill="#eef9ff" stroke="#a8d0e4" />
      <path d="M4 9h18M4 13h18M4 17h18M4 21h18M4 25h18" stroke="#2890b8" strokeWidth="2" />
    </svg>
  )],
  ["G", (
    <svg width="32" height="32" viewBox="0 0 32 32">
      <path d="M29 2L28 8L23 10L15 11Q9 14 8 20Q8 25 12 25H19L22 19L15 20L17 15L28 12L26 26L21 30H6Q1 28 2 22Q4 12 12 7L24 5Z" fill="#e02a1c" stroke="#8a0c08" />
    </svg>
  )],
  ["Disk 64", (
    <svg width="32" height="34" viewBox="0 0 32 34">
      <path d="M1 1h28l2 2v29H1z" fill="#1c34d8" stroke="#10185c" />
      <rect x="10" y="1" width="14" height="11" fill="#d8dce8" /><rect x="17" y="3" width="4" height="8" fill="#1c2c90" />
      <rect x="5" y="15" width="22" height="15" fill="#fff" /><path d="M5 30h22" stroke="#c03040" strokeWidth="2" />
      <path d="M6 19h20M6 22h20M6 26h10" stroke="#b83040" />
      <text x="17" y="29" fontSize="8" fontFamily="Liberation Sans" fontWeight="bold" fill="#333">64</text>
    </svg>
  )],
  ["Polar", (
    <svg width="34" height="34" viewBox="0 0 34 34">
      <path d="M11 12Q15 9 17 9Q22 6 27 8Q32 12 31 17Q28 22 21 22Q17 24 18 31L6 32L11 23L12 18Z" fill="#0c9a48" />
      <path d="M6 26H14M5 29H14M9 22H14" stroke="#12506c" />
      <path d="M4 27L9 4H27V8H17" fill="none" stroke="#0c7a48" />
    </svg>
  )],
  ["Word", (
    <svg width="32" height="32" viewBox="0 0 32 32">
      <path d="M2 28Q2 6 10 3H20V28Z" fill="#dbe6f8" stroke="#fff" strokeWidth="2" />
      <path d="M11 3L31 6L29 29L10 26Z" fill="#fff" stroke="#90a8d0" />
      <path d="M23 11h6M23 15h6M12 21l16 2M12 24l16 2" stroke="#2b579a" strokeWidth="2" />
      <text x="10" y="19" fontSize="13" fontFamily="Liberation Serif" fontWeight="bold" fill="#1f3e88">W</text>
    </svg>
  ), "stack"],
  ["Excel", (
    <svg width="32" height="32" viewBox="0 0 32 32">
      <path d="M2 28Q2 6 10 3H22V28Z" fill="#9cc880" stroke="#fff" strokeWidth="2" />
      <path d="M9 8L31 9L29 30L9 27Z" fill="#f6fbf2" stroke="#80b060" />
      <g fill="#6aa84a"><rect x="13" y="20" width="4" height="3" /><rect x="19" y="20" width="4" height="3" /><rect x="25" y="20" width="3" height="3" /><rect x="13" y="25" width="4" height="2" /><rect x="19" y="25" width="4" height="3" /><rect x="25" y="25" width="3" height="3" /><rect x="24" y="13" width="4" height="4" /></g>
      <path d="M9 7l10 12M18 7l-9 12" stroke="#1f6028" strokeWidth="3" />
    </svg>
  ), "stack"],
  ["DingTalk", (
    <svg width="29" height="30" viewBox="0 0 29 30">
      <rect width="29" height="30" rx="6" fill="#1285f8" />
      <path d="M8 4Q20 8 22 13Q22 17 17 21H20L11 28L14 20L11 19L13 17L9 14L12 14Q7 10 8 4Z" fill="#fff" />
    </svg>
  )],
  ["Genesis", chameleon],
  ["X server", (
    <svg width="32" height="32" viewBox="0 0 32 32">
      <path d="M3 2h8l18 28h-8z" fill="#6a1078" stroke="#220428" /><path d="M29 2L17 15M14 18L3 30" stroke="#332038" strokeWidth="2.5" />
    </svg>
  ), "active"],
  ["Graphic Editor", chameleon],
];

const groups = [
  [["to", "#fff"], ["ts", "#00a57c"]],
  [["cs.etch", C.aqua]],
  [["cs", C.amber], ["pln2t", "#dcac00"], ["pln3b", "#dcac00"]],
  [["ss.etch", C.aqua]],
  [["ss", C.amber], ["bs", "#00a57c", C.green], ["bo", "#fff", "#f00000"]],
  [["drl", "#9ab3bc"], ["rout", "#dadada"]],
  ["bp", "dd", "tp", "ydkdrl", "cvia", "biaozhu", "dwk", "dwkby", "auto_chk_pnl", "d", "clamp_area",
    "cs_clampline", "ss_clampline", "via++", "banwaiwu", "via+covered", "ss_isolated_"].map((n) => [n, C.aqua]),
];

const menus = [["", "F", "ile"], ["", "E", "dit"], ["", "A", "ctions"], ["O", "p", "tions"], ["Analysis", "", ""], ["DFM", "", ""], ["", "S", "tep"], ["", "R", "out"], ["", "W", "indows"]];

export default function App() {
  return (
    <Screen>
      <Global />
      <TitleBar>
        <TitleText><AppIcon size={15} />Graphic Editor 9.07b2 (00@HY-HYCAM-PC411 - Windows, pid:5952)</TitleText>
        <WinButtons>
          <WinButton $first aria-label="Minimize"><svg width="13" height="6"><rect x="0.5" y="0.5" width="12" height="4" fill="#fff" stroke="#455" /></svg></WinButton>
          <WinButton aria-label="Restore"><svg width="13" height="12"><path d="M4.5 1.5h7v7h-7z M1.5 4.5h7v6h-7z" fill="none" stroke="#fff" strokeWidth="2" /></svg></WinButton>
          <WinButton $wide aria-label="Close"><svg width="12" height="10"><path d="M2 1l8 8M10 1l-8 8" stroke="#fff" strokeWidth="3" /></svg></WinButton>
        </WinButtons>
      </TitleBar>

      <TopRow>
        <MenuBar>
          {menus.map(([a, u, b]) => <MenuItem key={a + u + b}>{a}{u && <u>{u}</u>}{b}</MenuItem>)}
          <MenuItem $end>Help</MenuItem>
        </MenuBar>
        <Brand>
          <Logo aria-label="Frontline">
            <svg width="22" height="26" viewBox="0 0 22 26"><g stroke="#e00" strokeWidth="1.5"><path d="M5 3H20M2 9H18M0 16H17M2 23H15" /></g><path d="M12 2l10 -1v4h-10zM11 8l10 -1v4h-10zM9 15l10 -1v4h-10zM8 22l10 -1v4h-10z" fill="#e00" /></svg>
            <span>Fr</span>
            <svg width="20" height="22" viewBox="0 0 20 22"><circle cx="10" cy="12" r="8.5" fill="none" stroke="#00007e" strokeWidth="2" /><path d="M10 8l4 4l-4 4l-4 -4z" fill="#e00" /></svg>
            <span>ntline</span>
          </Logo>
          <Product>Genesis 2000<small>Graphic Editor</small></Product>
          <Stamp><span>31 Dec 2022</span><span>08:51 PM</span></Stamp>
        </Brand>
      </TopRow>

      <Work>
        <Side>
          <JobBox>
            <div><dt>Job :</dt><dd>4a06219ra0</dd></div>
            <div><dt>Step:</dt><dd>pnl</dd></div>
          </JobBox>
          <MatrixFrame><MatrixButton>Job Matrix ...</MatrixButton></MatrixFrame>
          <LayerArea>
            <LayerList>
              {groups.map((g) => (
                <LayerGroup key={g[0][0]}>
                  {g.map(([n, bg, sw]) => (
                    <LayerRow key={n}>
                      <LayerTick type="checkbox" id={"ly-" + n} $on={n === "bo"} />
                      <Swatch $c={sw || "#000"}>
                        {n === "bo" && <svg width="14" height="14" viewBox="0 0 14 14"><path d="M2 2h8l-2 2l4 5l-2 2l-5 -4l-3 3z" fill="#fff" /></svg>}
                      </Swatch>
                      <LayerName htmlFor={"ly-" + n} $c={bg}>
                        {n}
                        {n === "bo" && <svg width="5" height="5" viewBox="0 0 5 5" shapeRendering="crispEdges"><path d="M0 .5h5M0 2.5h5M0 4.5h5M.5 0v5M2.5 0v5M4.5 0v5" stroke="#000" /></svg>}
                      </LayerName>
                    </LayerRow>
                  ))}
                </LayerGroup>
              ))}
            </LayerList>
          </LayerArea>
          <Selected>Selected : 2</Selected>
        </Side>

        <Canvas>
          <PanelDrawing />
          <Popview />
        </Canvas>

        <Palette>
          <ToolGrid>
            {aquaTools.map((n) => (
              <Tool key={n} aria-label={n} $tone={n.startsWith("light") ? "red" : "aqua"}><Glyph name={n} back="aqua" /></Tool>
            ))}
          </ToolGrid>
          <ToolGrid $gray>
            {grayTools.map((n, i) => (
              <Tool key={n} aria-label={n} $tone={n === "arrow" ? "active" : i > 19 ? "amber" : "gray"}>
                <Glyph name={n} back={n === "arrow" ? "black" : i > 19 ? "amber" : i < 4 ? "white" : "gray"} />
              </Tool>
            ))}
          </ToolGrid>
          <Overview>
            <svg role="img" aria-label="Overview" shapeRendering="crispEdges">
              <rect x="0" y="141" width="160" height="131" fill={C.red} />
              <path d="M160 117.5H.5V315.5H160" fill="none" stroke="#3f7f14" />
              <path d="M13 272V147M113 147V272" stroke="#a8a8a8" strokeWidth="2" />
              <path d="M12 147H114" stroke="#38c8d0" strokeWidth="2" />
              <path d="M13 272V281H113V272" stroke="#fff" strokeWidth="2" fill="none" />
              <path d="M10 278l7 7M17 278l-7 7" stroke="#fff" />
            </svg>
          </Overview>
          <Coords>{'X = 11.538271"\nY = 8.973672"'}</Coords>
        </Palette>
      </Work>

      <Lower>
        <StatusRow>
          <StatusButton aria-label="Snap"><svg width="20" height="22" viewBox="0 0 20 22"><path d="M.5 .5h19v21H.5zM4 5l12 12M4 10V5h5M16 12v5h-5" fill="none" stroke="#000" /></svg></StatusButton>
          <StatusButton aria-label="Angle"><svg width="20" height="22" viewBox="0 0 20 22"><path d="M.5 .5h19v21H.5zM17 4L4 17H10M12 14h5v4h-5zM4 4v4h3" fill="none" stroke="#000" /></svg></StatusButton>
          <StatusButton $teal aria-label="Grid"><svg width="18" height="20" viewBox="0 0 18 20"><path d="M.5 .5h17v19H.5zM9 3v14M3 7v10h12V7L12 3H6zM3 10h12" fill="none" stroke="#000" /></svg></StatusButton>
          <EntryLabel htmlFor="xy">X Y :</EntryLabel>
          <Entry id="xy" />
          <StatusButton $teal aria-label="Alert"><svg width="16" height="20" viewBox="0 0 16 20"><path d="M.5 .5h15v19H.5z" fill="none" stroke="#000" /><path d="M8 4v8M8 14v2" stroke="#000" strokeWidth="2" /></svg></StatusButton>
          <Message>{"<M1> - Single feature selection ; <M1><M1> Global selection"}</Message>
          <UnitBox>
            <UnitInner>
              <UnitSelect aria-label="Units" defaultValue="Inch"><option>Inch</option></UnitSelect>
              <UnitMark />
            </UnitInner>
          </UnitBox>
        </StatusRow>
        <InfoWrap>
          <InfoBar><p>bo,#11333,Text(.nomenclature),X=11.3734001,Y=8.7400176,SERIAL NO.:,POS,simple,Ang=270,Mirror</p></InfoBar>
        </InfoWrap>
        <Taskbar>
          <Orb aria-label="Start">
            <svg width="40" height="40" viewBox="0 0 40 40">
              <defs><radialGradient id="orb" cx="50%" cy="85%" r="80%"><stop offset="0" stopColor="#58d8f8" /><stop offset=".5" stopColor="#1c5c9c" /><stop offset="1" stopColor="#9cb8d4" /></radialGradient></defs>
              <circle cx="20" cy="20" r="18" fill="url(#orb)" stroke="#0c2850" />
              <path d="M10 13q5 -3 9 -1l-1 8q-5 -2 -9 1z" fill="#f0582c" /><path d="M21 12q5 3 10 1l-2 8q-5 2 -9 -1z" fill="#8cc838" />
              <path d="M9 22q4 -3 9 -1l-2 8q-4 -2 -8 1z" fill="#48a8f0" /><path d="M20 22q4 3 9 1l-2 8q-5 2 -9 -1z" fill="#f8cc38" />
            </svg>
          </Orb>
          <TaskButtons>
            {tasks.map(([n, icon, st]) => (
              <Task key={n} aria-label={n} $active={st === "active"} $stack={st === "stack" || st === "active"}>{icon}</Task>
            ))}
          </TaskButtons>
          <Tray>
            <svg width="15" height="16" viewBox="0 0 15 16"><rect y="7" width="15" height="8" fill="#ddd" /><path d="M2 9.5h11M2 12.5h11" stroke="#555" strokeDasharray="2 1" /><path d="M4 6q2 -4 4 -2t5 -3" fill="none" stroke="#ddd" /></svg>
            <svg width="16" height="16" viewBox="0 0 16 16"><circle cx="8" cy="8" r="7" fill="#1c30c0" stroke="#dde" /><text x="8" y="12" textAnchor="middle" fontSize="12" fontWeight="bold" fontFamily="Liberation Sans" fill="#fff">?</text></svg>
            <svg width="10" height="22" viewBox="0 0 10 22"><path d="M3.5 .5h5v4h-5zM1.5 3.5h4v4h-4z" fill="#0c2748" stroke="#fff" /><path d="M2 17h6l-3 3z" fill="#fff" /></svg>
            <svg width="8" height="6" viewBox="0 0 8 6"><path d="M0 5L4 1L8 5Z" fill="#fff" /></svg>
            <svg width="18" height="18" viewBox="0 0 18 18"><path d="M2 1v16" stroke="#fff" strokeWidth="2" /><path d="M4 3q5 -2 10 1v6q-5 -3 -10 -1z" fill="#fff" /><circle cx="11" cy="12" r="5" fill="#d82020" /><path d="M9 10l4 4M13 10l-4 4" stroke="#fff" strokeWidth="1.5" /></svg>
            <svg width="16" height="16" viewBox="0 0 16 16"><path d="M1 5h3l4 -4v14l-4 -4H1z" fill="#fff" /><path d="M10 5q2 3 0 6M12 3q4 5 0 10" fill="none" stroke="#fff" /></svg>
            <svg width="16" height="16" viewBox="0 0 16 16"><path d="M5 3h10v8H5zM7 14.5h7M10 11v3M2 1v4M4 1v4M1 5h4v3H3v6" fill="none" stroke="#fff" strokeWidth="1.5" /></svg>
            <Clock>{"20:57\n2022/12/31"}</Clock>
            <ShowDesktop aria-label="Show desktop" />
          </Tray>
        </Taskbar>
      </Lower>
    </Screen>
  );
}
